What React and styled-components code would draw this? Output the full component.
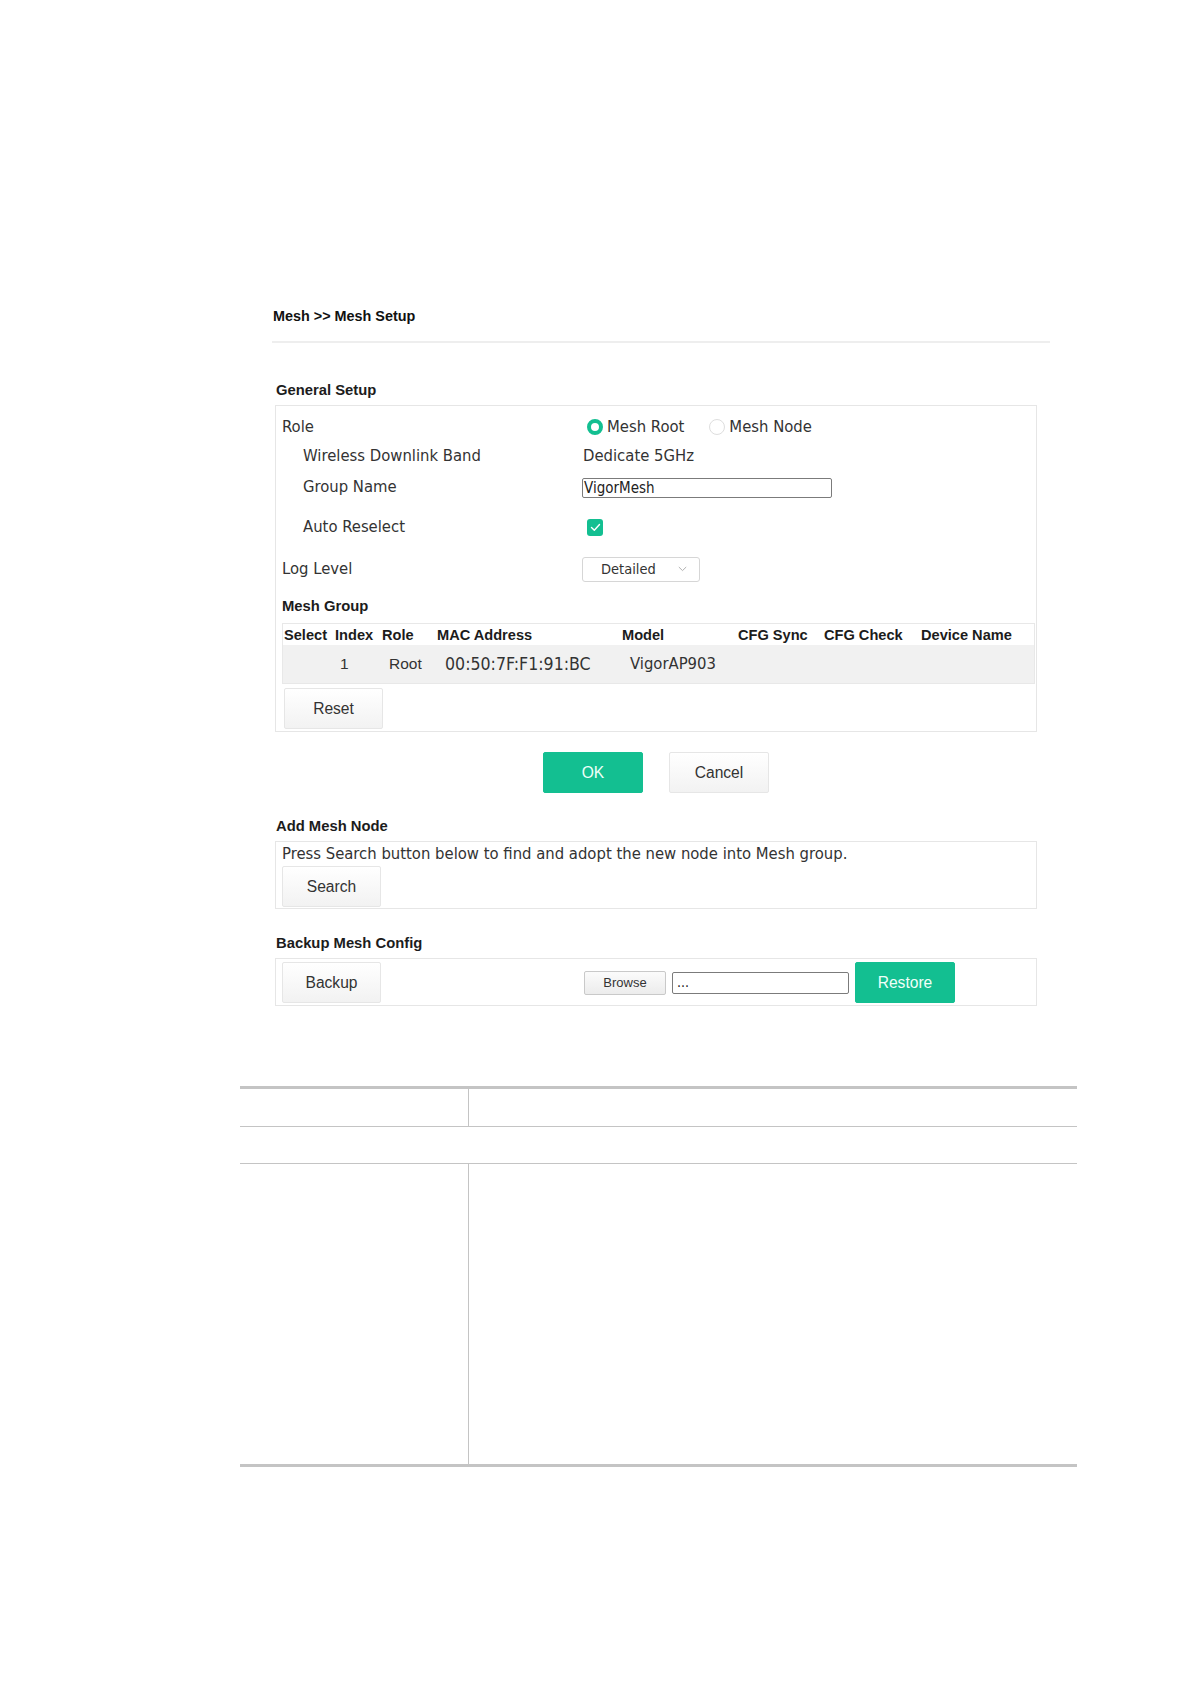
import React from "react";
import styled, { createGlobalStyle } from "styled-components";

const SANS = '"DejaVu Sans Condensed", "DejaVu Sans", Verdana, sans-serif';
const ARIAL = '"Liberation Sans", Arial, sans-serif';
const GREEN = "#13bf91";
const LINE = "#c4c4c4";

const Global = createGlobalStyle`
  html, body { margin: 0; padding: 0; background: #fff; }
  body { font-family: ${SANS}; color: #333; }
  *, *::before, *::after { box-sizing: border-box; }
`;

const Page = styled.div`
  width: 1190px;
  min-height: 1684px;
  padding-top: 306px;
  display: flex;
  flex-direction: column;
`;

const Content = styled.div`
  margin-left: 272px;
  width: 778px;
  display: flex;
  flex-direction: column;
`;

const Title = styled.h1`
  margin: 0;
  padding-left: 1px;
  font: bold 14.4px/20px ${ARIAL};
  color: #111;
`;

const Rule = styled.div`
  height: 2px;
  margin-top: 15px;
  background: #eeeeee;
`;

const Heading = styled.h2`
  margin: ${(p) => p.$top}px 0 ${(p) => p.$bottom}px 4px;
  font: bold 14.8px/20px ${ARIAL};
  color: #1c1c1c;
`;

const Box = styled.div`
  margin-left: 3px;
  width: 762px;
  border: 1px solid #e6e6e6;
  padding: ${(p) => p.$pad};
`;

const FormRow = styled.div`
  display: grid;
  grid-template-columns: 300px 1fr;
  align-items: center;
  height: ${(p) => p.$h}px;
`;

const Label = styled.div`
  padding-left: ${(p) => (p.$indent ? 21 : 0)}px;
  font: 16.5px/20px ${SANS};
  color: #333;
`;

const Value = styled.div`
  display: flex;
  align-items: center;
  font: 16.5px/20px ${SANS};
  color: #333;
`;

const RadioOption = styled.label`
  display: flex;
  align-items: center;
  gap: 4px;
  margin-left: ${(p) => p.$ml}px;
`;

const RadioDot = styled.span`
  width: 16px;
  height: 16px;
  border-radius: 50%;
  background: #fff;
  border: ${(p) => (p.$on ? `4px solid ${GREEN}` : "1px solid #dedede")};
`;

const PlainValue = styled.span`
  margin-left: 1px;
`;

const TextInput = styled.div`
  width: 250px;
  height: 20px;
  margin-top: 1px;
  border: 1px solid #7b7b7b;
  border-radius: 2px;
  padding: 0 1px;
  font: 15px/18px ${SANS};
  color: #222;
`;

const Check = styled.span`
  margin-left: 5px;
  width: 16px;
  height: 17px;
  border-radius: 3px;
  background: ${GREEN};
  display: flex;
  align-items: center;
  justify-content: center;
`;

const Select = styled.div`
  width: 118px;
  height: 25px;
  border: 1px solid #d6d6d6;
  border-radius: 3px;
  padding: 0 12px 0 18px;
  display: flex;
  align-items: center;
  justify-content: space-between;
  font: 14.5px/20px ${SANS};
  color: #333;
`;

const SubHeading = styled.div`
  font: bold 14.8px/20px ${ARIAL};
  color: #1c1c1c;
`;

const Table = styled.div`
  width: 753px;
  border: 1px solid #e8e8e8;
`;

const TRow = styled.div`
  display: grid;
  grid-template-columns: 51px 47px 55px 185px 116px 86px 97px 1fr;
  align-items: center;
  height: ${(p) => p.$h}px;
  background: ${(p) => p.$bg || "#fff"};
`;

const Th = styled.div`
  padding-left: 1px;
  font: bold 14.6px/20px ${ARIAL};
  color: #1c1c1c;
  white-space: nowrap;
`;

const Td = styled.div`
  padding-left: ${(p) => p.$pl ?? 8}px;
  font: ${(p) => (p.$sans ? `${p.$fs || 16.5}px/20px ${SANS}` : `15.5px/20px ${ARIAL}`)};
  color: #333;
  white-space: nowrap;
`;

const Button = styled.button`
  width: ${(p) => p.$w || 99}px;
  height: ${(p) => p.$h || 41}px;
  margin: 0 0 0 ${(p) => p.$ml || 0}px;
  padding: 0;
  border-radius: 2px;
  font: 15.6px/20px ${ARIAL};
  cursor: pointer;
  ${(p) =>
    p.$primary
      ? `background: ${GREEN}; border: 1px solid ${GREEN}; color: #effff9;`
      : `background: linear-gradient(#ffffff, #f2f2f2); border: 1px solid #e6e6e6; color: #333;`}
`;

const ResetWrap = styled.div`
  margin-top: 4px;
`;

const ActionRow = styled.div`
  margin: 20px 0 0 3px;
  width: 762px;
  display: flex;
  justify-content: center;
  gap: 26px;
`;

const Note = styled.div`
  font: 16.5px/16px ${SANS};
  color: #333;
  white-space: nowrap;
`;

const SearchWrap = styled.div`
  margin-top: 4px;
`;

const BackupRow = styled.div`
  display: grid;
  grid-template-columns: 300px 1fr;
  align-items: center;
`;

const FileGroup = styled.div`
  display: flex;
  align-items: center;
  gap: 6px;
  margin-left: 2px;
`;

const BrowseButton = styled.button`
  width: 82px;
  height: 24px;
  padding: 0;
  border: 1px solid #c9c9c9;
  border-radius: 2px;
  background: linear-gradient(#fbfbfb, #ececec);
  font: 13px/20px ${ARIAL};
  color: #333;
`;

const FileField = styled.div`
  width: 177px;
  height: 22px;
  border: 1px solid #7b7b7b;
  border-radius: 2px;
  padding: 0 4px;
  font: 14px/18px ${SANS};
  color: #222;
`;

const DocTable = styled.div`
  margin: 80px 0 0 240px;
  width: 837px;
  border-top: 3px solid ${LINE};
  border-bottom: 3px solid ${LINE};
`;

const DocRow = styled.div`
  display: grid;
  grid-template-columns: ${(p) => (p.$split ? "229px 1fr" : "1fr")};
  height: ${(p) => p.$h}px;
  border-bottom: ${(p) => (p.$last ? "none" : `1px solid ${LINE}`)};
`;

const DocCell = styled.div`
  border-right: ${(p) => (p.$divider ? `1px solid ${LINE}` : "none")};
`;

const CheckMark = () => (
  <svg width="11" height="9" viewBox="0 0 11 9" fill="none">
    <path d="M1.5 4.5 L4.3 7.2 L9.5 1.6" stroke="#fff" strokeWidth="1.4" strokeLinecap="round" strokeLinejoin="round" />
  </svg>
);

const Chevron = () => (
  <svg width="9" height="6" viewBox="0 0 9 6" fill="none">
    <path d="M0.8 1 L4.5 4.6 L8.2 1" stroke="#b0b0b0" strokeWidth="1" />
  </svg>
);

const headers = ["Select", "Index", "Role", "MAC Address", "Model", "CFG Sync", "CFG Check", "Device Name"];

export default function App() {
  return (
    <>
      <Global />
      <Page>
        <Content>
          <Title>Mesh &gt;&gt; Mesh Setup</Title>
          <Rule />

          <Heading $top={37} $bottom={5}>General Setup</Heading>
          <Box $pad="6px 1px 2px 6px">
            <FormRow $h={30}>
              <Label>Role</Label>
              <Value>
                <RadioOption $ml={5}>
                  <RadioDot $on />
                  Mesh Root
                </RadioOption>
                <RadioOption $ml={25}>
                  <RadioDot />
                  Mesh Node
                </RadioOption>
              </Value>
            </FormRow>
            <FormRow $h={28}>
              <Label $indent>Wireless Downlink Band</Label>
              <Value>
                <PlainValue>Dedicate 5GHz</PlainValue>
              </Value>
            </FormRow>
            <FormRow $h={34}>
              <Label $indent>Group Name</Label>
              <Value>
                <TextInput>VigorMesh</TextInput>
              </Value>
            </FormRow>
            <FormRow $h={46}>
              <Label $indent>Auto Reselect</Label>
              <Value>
                <Check>
                  <CheckMark />
                </Check>
              </Value>
            </FormRow>
            <FormRow $h={38}>
              <Label>Log Level</Label>
              <Value>
                <Select>
                  <span>Detailed</span>
                  <Chevron />
                </Select>
              </Value>
            </FormRow>
            <FormRow $h={35}>
              <SubHeading>Mesh Group</SubHeading>
            </FormRow>
            <Table>
              <TRow $h={21}>
                {headers.map((h) => (
                  <Th key={h}>{h}</Th>
                ))}
              </TRow>
              <TRow $h={38} $bg="#f1f1f1">
                <Td />
                <Td $pl={6}>1</Td>
                <Td $pl={8}>Root</Td>
                <Td $sans $fs={17.6} $pl={9}>00:50:7F:F1:91:BC</Td>
                <Td $sans $pl={9}>VigorAP903</Td>
                <Td />
                <Td />
                <Td />
              </TRow>
            </Table>
            <ResetWrap>
              <Button $ml={2}>Reset</Button>
            </ResetWrap>
          </Box>

          <ActionRow>
            <Button $w={100} $primary>OK</Button>
            <Button $w={100}>Cancel</Button>
          </ActionRow>

          <Heading $top={23} $bottom={5}>Add Mesh Node</Heading>
          <Box $pad="4px 1px 1px 6px">
            <Note>Press Search button below to find and adopt the new node into Mesh group.</Note>
            <SearchWrap>
              <Button>Search</Button>
            </SearchWrap>
          </Box>

          <Heading $top={24} $bottom={5}>Backup Mesh Config</Heading>
          <Box $pad="3px 1px 2px 6px">
            <BackupRow>
              <div>
                <Button>Backup</Button>
              </div>
              <FileGroup>
                <BrowseButton>Browse</BrowseButton>
                <FileField>...</FileField>
                <Button $w={100} $primary>Restore</Button>
              </FileGroup>
            </BackupRow>
          </Box>
        </Content>

        <DocTable>
          <DocRow $split $h={38}>
            <DocCell $divider />
            <DocCell />
          </DocRow>
          <DocRow $h={37}>
            <DocCell />
          </DocRow>
          <DocRow $split $h={300} $last>
            <DocCell $divider />
            <DocCell />
          </DocRow>
        </DocTable>
      </Page>
    </>
  );
}
